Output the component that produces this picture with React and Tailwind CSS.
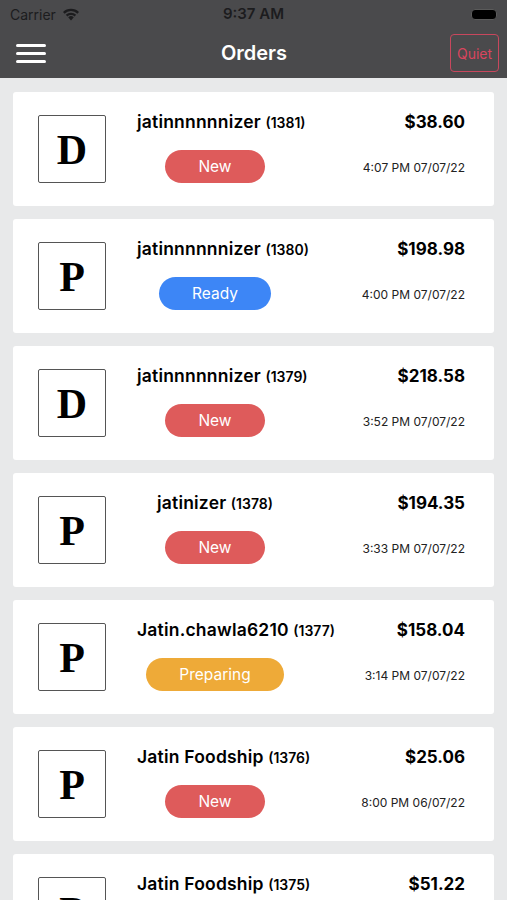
import React from 'react';

const orders = [
    { letter: 'D', name: 'jatinnnnnnizer', id: 1381, price: '$38.60', status: 'New', time: '4:07 PM 07/07/22' },
    { letter: 'P', name: 'jatinnnnnnizer', id: 1380, price: '$198.98', status: 'Ready', time: '4:00 PM 07/07/22' },
    { letter: 'D', name: 'jatinnnnnnizer', id: 1379, price: '$218.58', status: 'New', time: '3:52 PM 07/07/22' },
    { letter: 'P', name: 'jatinizer', id: 1378, price: '$194.35', status: 'New', time: '3:33 PM 07/07/22' },
    { letter: 'P', name: 'Jatin.chawla6210', id: 1377, price: '$158.04', status: 'Preparing', time: '3:14 PM 07/07/22' },
    { letter: 'P', name: 'Jatin Foodship', id: 1376, price: '$25.06', status: 'New', time: '8:00 PM 06/07/22' },
    { letter: 'P', name: 'Jatin Foodship', id: 1375, price: '$51.22', status: 'New', time: '7:41 PM 06/07/22' },
];

const statusStyles = {
    New: 'bg-[#de5b5b]',
    Ready: 'bg-[#3d86f6]',
    Preparing: 'bg-[#eeaa38]',
};

const font = { fontFamily: 'Inter, "Liberation Sans", sans-serif' };

const StatusBar = () => (
    <div className="h-[28px] flex items-center justify-between px-[10px] text-[#1c1c1e]">
        <div className="flex items-center gap-[6px] w-[120px]">
            <span className="text-[14px]">Carrier</span>
            <svg width="18" height="13" viewBox="0 0 18 13">
                <path d="M9 12.5 L6.2 9.3 A4 4 0 0 1 11.8 9.3 Z" fill="#1c1c1e" />
                <path d="M3.8 6.8 A7.4 7.4 0 0 1 14.2 6.8 L12.6 8.5 A5.1 5.1 0 0 0 5.4 8.5 Z" fill="#1c1c1e" />
                <path d="M1 4 A11.4 11.4 0 0 1 17 4 L15.4 5.7 A9 9 0 0 0 2.6 5.7 Z" fill="#1c1c1e" />
            </svg>
        </div>
        <span className="text-[15px] font-semibold">9:37 AM</span>
        <div className="w-[120px] flex justify-end">
            <div className="w-[26px] h-[11px] rounded-[4px] bg-black border border-[#5a5a5a]" />
        </div>
    </div>
);

const NavBar = () => (
    <div className="h-[50px] flex items-center justify-between pl-[16px] pr-[8px]">
        <div className="w-[60px] flex flex-col gap-[5px]">
            <div className="w-[30px] h-[3px] bg-white rounded-full" />
            <div className="w-[30px] h-[3px] bg-white rounded-full" />
            <div className="w-[30px] h-[3px] bg-white rounded-full" />
        </div>
        <h1 className="text-[20px] font-semibold text-white">Orders</h1>
        <div className="w-[67px] flex justify-end">
            <button className="w-[49px] h-[38px] border-[1.5px] border-[#c8475d] rounded-[4px] text-[14px] text-[#d9455e]">Quiet</button>
        </div>
    </div>
);

const OrderCard = ({ order }) => (
    <div className="bg-white rounded-[3px] h-[114px] flex items-center pl-[25px] pr-[29px]">
        <div className="w-[68px] h-[68px] border-[1.5px] border-[#555] rounded-[2px] flex items-center justify-center shrink-0">
            <span className="text-[42px] font-bold text-black leading-none pt-[2px]" style={{ fontFamily: '"Liberation Serif", "DejaVu Serif", serif' }}>{order.letter}</span>
        </div>
        <div className="w-[156px] ml-[31px] flex flex-col items-center self-stretch pt-[19px]">
            <div className="w-full text-center whitespace-nowrap text-black leading-[22px]">
                <span className="text-[17.5px] font-semibold tracking-[0.2px]">{order.name}</span>{' '}
                <span className="text-[14px] font-semibold">({order.id})</span>
            </div>
            <div className={`mt-[16px] h-[33px] px-[33px] rounded-full flex items-center text-[15.5px] text-white ${statusStyles[order.status]}`}>
                {order.status}
            </div>
        </div>
        <div className="flex-1 flex flex-col items-end self-stretch pt-[19px]">
            <span className="text-[17px] font-bold text-black leading-[22px]">{order.price}</span>
            <span className="mt-[26px] text-[12px] text-[#222]">{order.time}</span>
        </div>
    </div>
);

export default function App() {
    return (
        <div className="w-[507px] h-[900px] overflow-hidden bg-[#e8e9ea]" style={font}>
            <div className="bg-[#4a4a4c]">
                <StatusBar />
                <NavBar />
            </div>
            <div className="flex flex-col gap-[13px] px-[13px] pt-[14px]">
                {orders.map(order => (
                    <OrderCard key={order.id} order={order} />
                ))}
            </div>
        </div>
    );
}
